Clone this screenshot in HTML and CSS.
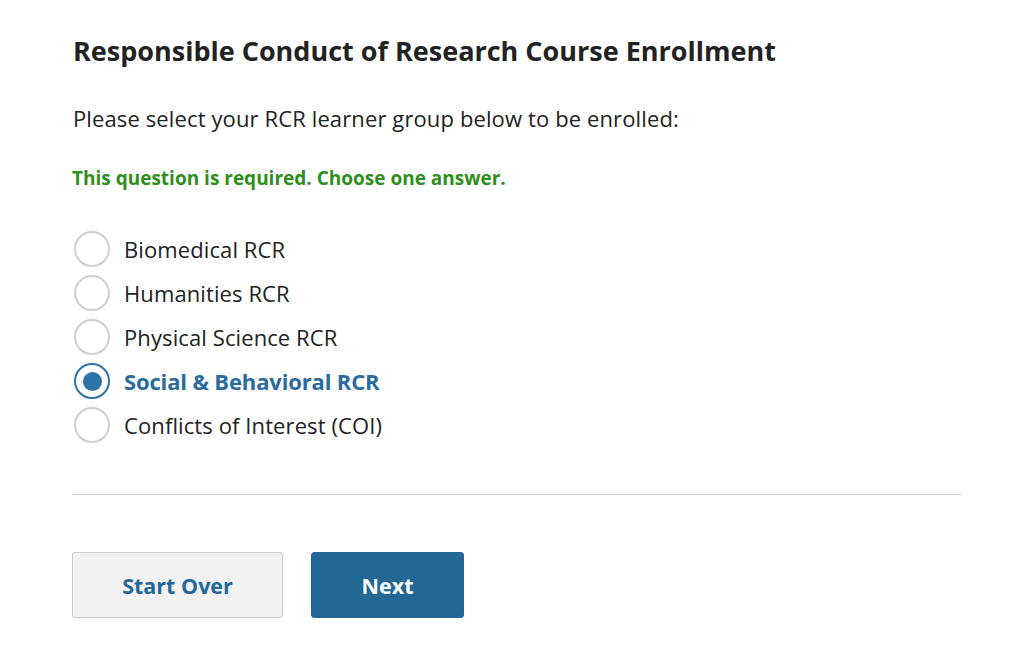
FILE: index.html
```html
<!DOCTYPE html>
<html>
<head>
<meta charset="utf-8">
<link rel="stylesheet" href="styles.css">
</head>
<body>
<main class="page">
  <h1 class="title">Responsible Conduct of Research Course Enrollment</h1>
  <p class="prompt">Please select your RCR learner group below to be enrolled:</p>
  <p class="required">This question is required. Choose one answer.</p>
  <ul class="options">
    <li class="option"><span class="radio"></span><span class="label">Biomedical RCR</span></li>
    <li class="option"><span class="radio"></span><span class="label">Humanities RCR</span></li>
    <li class="option"><span class="radio"></span><span class="label">Physical Science RCR</span></li>
    <li class="option selected"><span class="radio"></span><span class="label">Social &amp; Behavioral RCR</span></li>
    <li class="option"><span class="radio"></span><span class="label">Conflicts of Interest (COI)</span></li>
  </ul>
  <hr class="divider">
  <div class="actions">
    <button class="btn btn-secondary">Start Over</button>
    <button class="btn btn-primary">Next</button>
  </div>
</main>
</body>
</html>
```

FILE: styles.css
```css
html, body {
  margin: 0;
  padding: 0;
  background: #ffffff;
}

body {
  font-family: "Open Sans", "Liberation Sans", sans-serif;
  color: #222222;
}

.page {
  padding: 33px 63px 0 72px;
}

.title {
  margin: 0;
  font-size: 27px;
  line-height: 36px;
  font-weight: 700;
  color: #222222;
  padding-left: 1px;
}

.prompt {
  margin: 34px 0 0;
  font-size: 22px;
  line-height: 30px;
  letter-spacing: 0.12px;
  padding-left: 1px;
}

.required {
  margin: 32px 0 0;
  font-size: 19px;
  line-height: 26px;
  font-weight: 700;
  color: #2e8f1a;
}

.options {
  list-style: none;
  margin: 36px 0 0;
  padding: 0;
}

.option {
  display: flex;
  align-items: center;
  height: 44px;
  font-size: 22px;
  letter-spacing: 0.1px;
  color: #222222;
}

.radio {
  box-sizing: border-box;
  width: 36px;
  height: 36px;
  border: 2px solid #cfcfcf;
  border-radius: 50%;
  margin-left: 2px;
  margin-right: 14px;
  display: flex;
  align-items: center;
  justify-content: center;
  background: #fff;
}

.option.selected .radio {
  border-color: #2d75a8;
}

.option.selected .radio::after {
  content: "";
  width: 19px;
  height: 19px;
  border-radius: 50%;
  background: #2d75a8;
}

.option.selected .label {
  color: #2a6b9c;
  font-weight: 700;
  letter-spacing: -0.15px;
}

.divider {
  margin: 47px 0 0;
  border: 0;
  border-top: 1px solid #cccccc;
  height: 0;
}

.actions {
  display: flex;
  gap: 28px;
  margin-top: 57px;
}

.btn {
  box-sizing: border-box;
  height: 66px;
  border-radius: 3px;
  font-family: "Open Sans", "Liberation Sans", sans-serif;
  font-size: 21.5px;
  font-weight: 700;
  cursor: pointer;
}

.btn-secondary {
  width: 211px;
  background: #f2f2f2;
  border: 1px solid #cccccc;
  color: #24679a;
}

.btn-primary {
  width: 153px;
  background: #236895;
  border: 1px solid #236895;
  color: #ffffff;
}
```
